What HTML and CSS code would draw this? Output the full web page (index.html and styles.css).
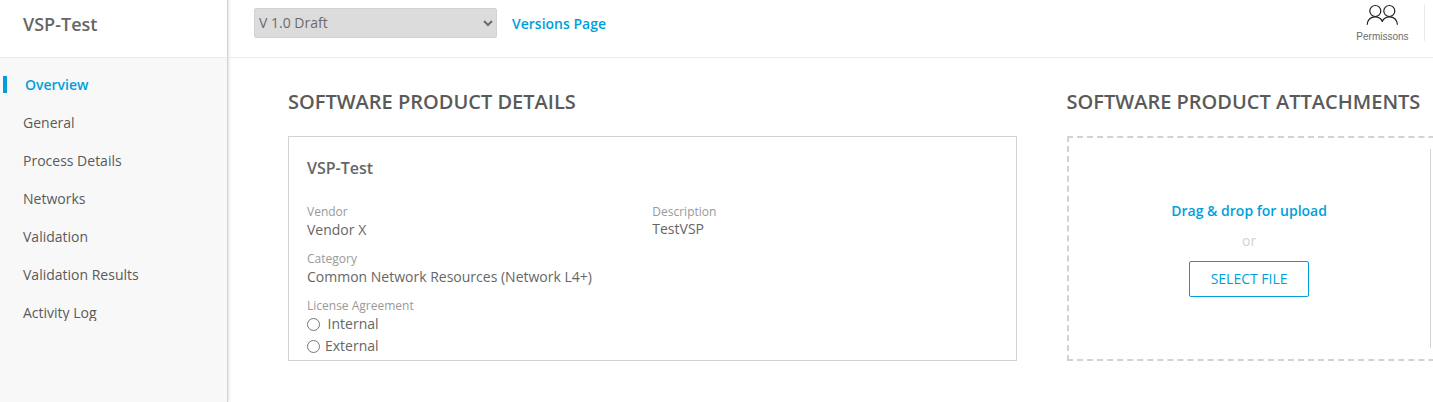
FILE: index.html
```html
<!DOCTYPE html>
<html lang="en">
<head>
<meta charset="utf-8">
<title>VSP-Test</title>
<link rel="stylesheet" href="styles.css">
</head>
<body>
<div class="app">
  <aside class="sidebar">
    <div class="sidebar-title">VSP-Test</div>
    <nav class="nav">
      <a class="nav-item active">Overview</a>
      <a class="nav-item">General</a>
      <a class="nav-item">Process Details</a>
      <a class="nav-item">Networks</a>
      <a class="nav-item">Validation</a>
      <a class="nav-item">Validation Results</a>
      <a class="nav-item">Activity Log</a>
    </nav>
  </aside>
  <main class="main">
    <header class="topbar">
      <select class="version-select" disabled><option>V 1.0 Draft</option></select>
      <a class="versions-link">Versions Page</a>
      <div class="permissions">
        <svg class="permissions-icon" width="34" height="22" viewBox="0 0 34 22" fill="none" stroke="#1f1f1f" stroke-width="1.2">
          <circle cx="10.3" cy="7" r="5.5"/>
          <circle cx="24.300" cy="7" r="5.5"/>
          <path d="M2.200 20.800c0-4.700 3.400-8 7.900-8 3.200 0 5.800 1.700 7.200 4.300 1.400-2.600 4-4.300 7.200-4.300 4.500 0 7.900 3.300 7.900 8M17.300 16.800v1.200"/>
        </svg>
        <span class="permissions-label">Permissons</span>
      </div>
      <div class="topbar-divider"></div>
    </header>
    <div class="content">
      <section class="details">
        <h2 class="heading">SOFTWARE PRODUCT DETAILS</h2>
        <div class="card">
          <h3 class="card-title">VSP-Test</h3>
          <div class="columns">
            <div class="column">
              <div class="field"><div class="label">Vendor</div><div class="value">Vendor X</div></div>
              <div class="field"><div class="label">Category</div><div class="value">Common Network Resources (Network L4+)</div></div>
              <div class="field">
                <div class="label">License Agreement</div>
                <label class="choice choice-wide"><input class="radio" type="radio" name="license"><span class="choice-text">Internal</span></label>
                <label class="choice"><input class="radio" type="radio" name="license"><span class="choice-text">External</span></label>
              </div>
            </div>
            <div class="column">
              <div class="field"><div class="label">Description</div><div class="value value-tight">TestVSP</div></div>
            </div>
          </div>
        </div>
      </section>
      <section class="attachments">
        <h2 class="heading">SOFTWARE PRODUCT ATTACHMENTS</h2>
        <div class="dropzone">
          <div class="upload">
            <div class="upload-text">Drag &amp; drop for upload</div>
            <div class="upload-or">or</div>
            <button class="upload-button">SELECT FILE</button>
          </div>
          <div class="dropzone-divider"></div>
        </div>
      </section>
    </div>
  </main>
</div>
</body>
</html>
```
FILE: styles.css
```css
* { box-sizing: border-box; }
body {
  margin: 0;
  font-family: "Open Sans", sans-serif;
  font-size: 14px;
  line-height: 19px;
  color: #5a5a5a;
  background: #fff;
  overflow: hidden;
}
.app { display: flex; height: 402px; overflow: hidden; }
.sidebar {
  flex: none;
  width: 228px;
  background: #f8f8f8;
  border-right: 1px solid #d2d2d2;
  box-shadow: 1px 0 3px rgba(0, 0, 0, 0.12);
}
.sidebar-title {
  height: 58px;
  padding: 12px 23px 0;
  background: #fff;
  border-bottom: 1px solid #eaeaea;
  color: #666;
  font-size: 18px;
  font-weight: 600;
  line-height: 25px;
}
.nav { height: 263px; padding-top: 8px; overflow: hidden; }
.nav-item { display: flex; align-items: flex-start; height: 38px; padding: 9px 0 0 23px; }
.nav-item.active { padding-left: 3px; color: #009fdb; font-weight: 600; gap: 18px; }
.nav-item.active::before { content: ""; width: 4px; height: 17px; margin-top: 1px; background: #009fdb; }
.main { flex: none; width: 1205px; overflow: hidden; }
.topbar {
  display: flex;
  align-items: flex-start;
  height: 58px;
  padding-left: 26px;
  border-bottom: 1px solid #eaeaea;
}
.version-select {
  width: 243px;
  height: 30px;
  margin-top: 8px;
  padding: 0 0 2px;
  border: 1px solid #d2d2d2;
  border-radius: 2px;
  background: #dcdcdc;
  color: #6b6b6b;
  font: 14px "Open Sans", sans-serif;
  opacity: 1;
}
.versions-link { margin: 14px 0 0 15px; color: #009fdb; font-weight: 600; }
.permissions { display: flex; flex-direction: column; align-items: center; margin: 4px 15.4px 0 auto; }
.permissions-icon { display: block; }
.permissions-label { font: 10px/14px "Liberation Sans", sans-serif; margin-top: 4px; color: #6b6b6b; }
.topbar-divider { width: 1px; height: 37px; margin: 4px 8px 0 0; background: #eaeaea; }
.content { display: flex; gap: 49.6px; padding: 30px 0 0 60px; }
.details { flex: none; width: 729px; }
.attachments { flex: none; width: 729px; }
.heading { margin: 0 0 20px; font-size: 20px; font-weight: 600; line-height: 28px; white-space: nowrap; }
.card { height: 225px; padding: 20px 18px 0; border: 1px solid #d2d2d2; color: #666; overflow: hidden; }
.card-title { margin: 0 0 24px; font-size: 16px; font-weight: 600; line-height: 22px; }
.columns { display: grid; grid-template-columns: 345.3px 1fr; }
.field { margin-bottom: 11px; }
.label { font-size: 12px; line-height: 18px; color: #999; }
.value { line-height: 18px; }
.value-tight { line-height: 16px; }
.choice { display: flex; align-items: flex-start; height: 22px; gap: 5px; }
.choice-wide { gap: 7.6px; }
.choice-text { line-height: 18px; }
.radio { width: 13px; height: 13px; margin: 3px 0 0; }
.dropzone { display: flex; align-items: center; height: 225px; border: 2px dashed #d2d2d2; }
.upload { display: flex; flex-direction: column; align-items: center; width: 361px; }
.upload-text { color: #009fdb; font-weight: 600; }
.upload-or { margin: 11px 0; color: #d2d2d2; }
.upload-button {
  width: 120px;
  height: 36px;
  margin-right: 1px;
  padding: 0 0 0 1px;
  border: 1px solid #009fdb;
  border-radius: 2px;
  background: #fff;
  color: #009fdb;
  font: 14px "Open Sans", sans-serif;
}
.dropzone-divider { width: 1px; height: 199px; background: #d2d2d2; }
```
